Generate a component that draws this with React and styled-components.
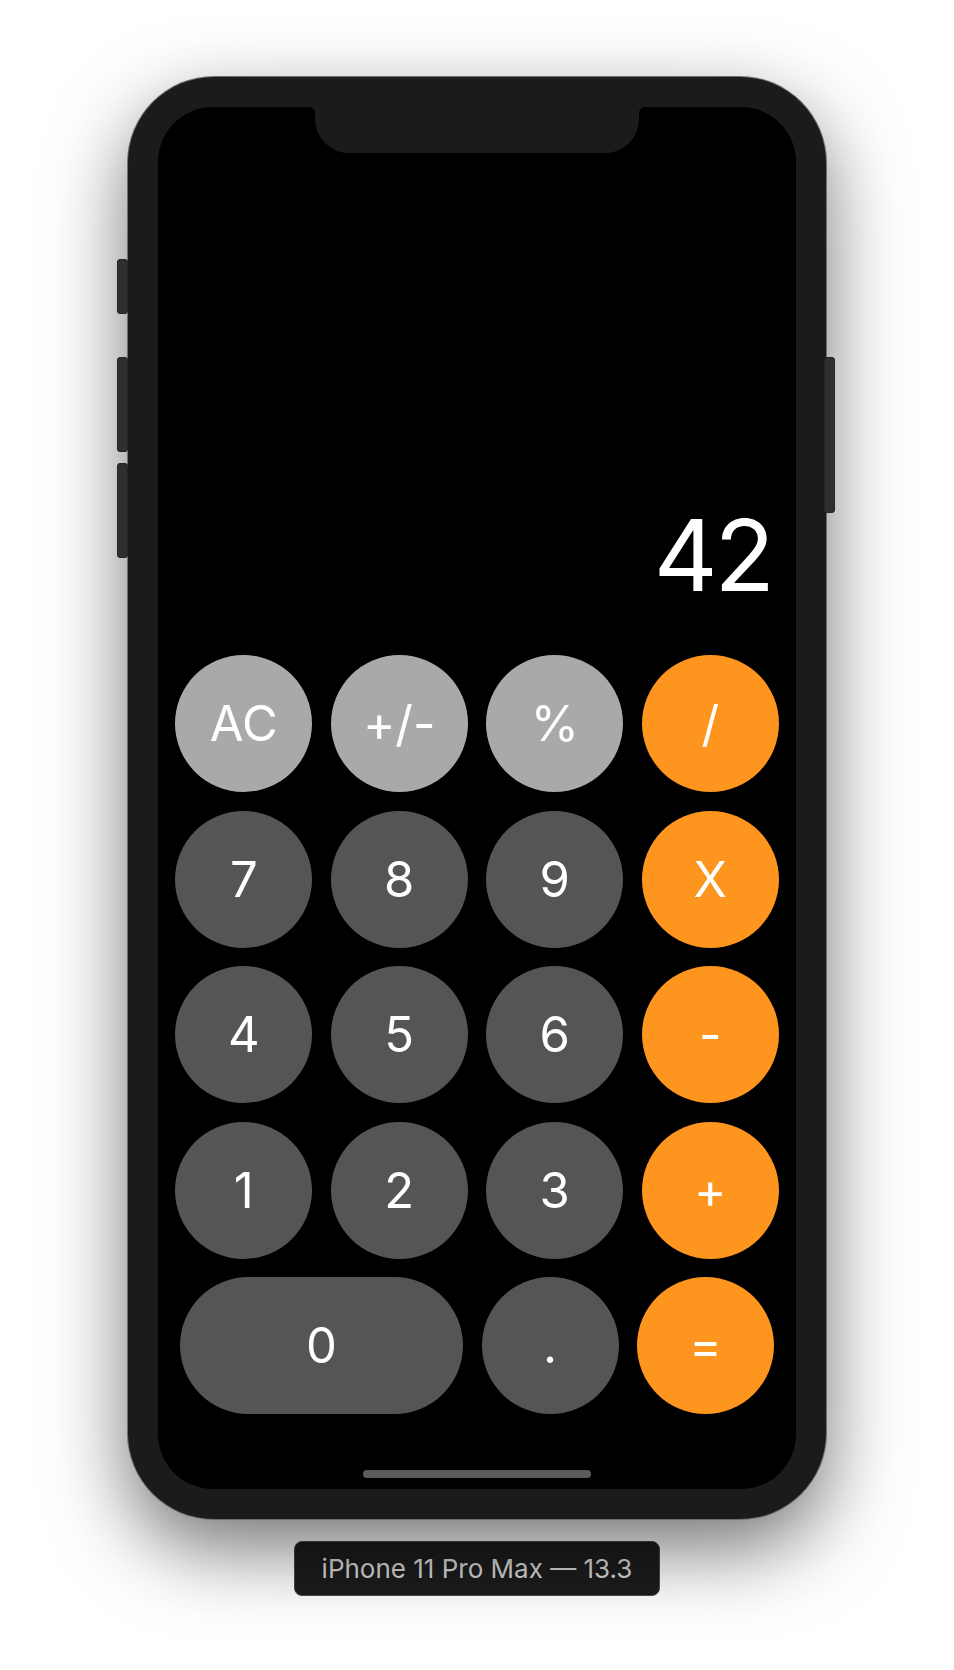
import styled, { createGlobalStyle } from 'styled-components';

const GlobalStyle = createGlobalStyle`
  html, body {
    margin: 0;
    padding: 0;
    background: #ffffff;
  }
  body {
    font-family: Inter, "Liberation Sans", Arial, sans-serif;
  }
`;

const Page = styled.div`
  width: 954px;
  height: 1670px;
  box-sizing: border-box;
  padding-top: 77px;
  display: flex;
  flex-direction: column;
  align-items: center;
  overflow: hidden;
`;

const Phone = styled.div`
  position: relative;
  width: 698px;
  height: 1442px;
  box-sizing: border-box;
  padding: 30px;
  border-radius: 86px;
  background: #1b1b1b;
  box-shadow: 0 0 0 1px #707070, 0 30px 80px rgba(0, 0, 0, 0.55);
`;

// hardware buttons sticking out of the frame
const SideKey = styled.div`
  position: absolute;
  top: ${(p) => p.$top}px;
  height: ${(p) => p.$height}px;
  width: 11px;
  ${(p) => (p.$right ? 'right: -9px;' : 'left: -11px;')}
  border-radius: 4px;
  background: #2f2f2f;
  box-shadow: inset 0 0 0 1px #262626;
`;

const Notch = styled.div`
  position: absolute;
  top: 30px;
  left: 187px;
  width: 324px;
  height: 46px;
  background: #1b1b1b;
  border-radius: 0 0 34px 34px;
  z-index: 2;

  &::before,
  &::after {
    content: '';
    position: absolute;
    top: 0;
    width: 7px;
    height: 7px;
  }
  &::before {
    left: -7px;
    background: radial-gradient(circle at 0 100%, transparent 7px, #1b1b1b 7.5px);
  }
  &::after {
    right: -7px;
    background: radial-gradient(circle at 100% 100%, transparent 7px, #1b1b1b 7.5px);
  }
`;

const Screen = styled.div`
  height: 100%;
  border-radius: 55px;
  background: #000000;
  display: flex;
  flex-direction: column;
  overflow: hidden;
`;

const Display = styled.div`
  flex: 1;
  display: flex;
  align-items: flex-end;
  justify-content: flex-end;
  padding: 0 24px 50px;
  color: #ffffff;
  font-size: 99px;
  line-height: 100px;
  font-weight: 400;
  letter-spacing: -3px;
`;

const Keypad = styled.div`
  display: flex;
  flex-direction: column;
  gap: 18.5px;
`;

const KeyRow = styled.div`
  display: flex;
  justify-content: center;
  gap: 18.5px;
`;

const keyColors = {
  light: '#a9a9a9',
  dark: '#555555',
  accent: '#fd951f',
};

const Key = styled.button`
  width: ${(p) => (p.$wide ? 283 : 137)}px;
  height: 137px;
  flex: none;
  padding: 0;
  border: none;
  border-radius: 69px;
  background: ${(p) => keyColors[p.$variant]};
  color: #ffffff;
  font-family: Inter, "Liberation Sans", Arial, sans-serif;
  font-size: 49px;
  line-height: 1;
  font-weight: 400;
  display: flex;
  align-items: center;
  justify-content: center;
`;

const HomeBar = styled.div`
  width: 228px;
  height: 8px;
  border-radius: 4px;
  background: #5b5b5b;
  margin: 56px auto 11px;
`;

const DeviceLabel = styled.div`
  margin-top: 22px;
  width: 366px;
  height: 55px;
  box-sizing: border-box;
  border: 1px solid #4a4a4a;
  border-radius: 8px;
  background: #1c1c1c;
  color: #d8d8d8;
  font-size: 26px;
  display: flex;
  align-items: center;
  justify-content: center;
`;

const rows = [
  [
    ['AC', 'light'],
    ['+/-', 'light'],
    ['%', 'light'],
    ['/', 'accent'],
  ],
  [
    ['7', 'dark'],
    ['8', 'dark'],
    ['9', 'dark'],
    ['X', 'accent'],
  ],
  [
    ['4', 'dark'],
    ['5', 'dark'],
    ['6', 'dark'],
    ['-', 'accent'],
  ],
  [
    ['1', 'dark'],
    ['2', 'dark'],
    ['3', 'dark'],
    ['+', 'accent'],
  ],
];

export default function App() {
  return (
    <Page>
      <GlobalStyle />
      <Phone>
        <SideKey $top={182} $height={55} />
        <SideKey $top={280} $height={95} />
        <SideKey $top={386} $height={95} />
        <SideKey $right $top={280} $height={156} />
        <Notch />
        <Screen>
          <Display>42</Display>
          <Keypad>
            {rows.map((row, i) => (
              <KeyRow key={i}>
                {row.map(([label, variant]) => (
                  <Key key={label} $variant={variant}>{label}</Key>
                ))}
              </KeyRow>
            ))}
            <KeyRow>
              <Key $wide $variant="dark">0</Key>
              <Key $variant="dark">.</Key>
              <Key $variant="accent">=</Key>
            </KeyRow>
          </Keypad>
          <HomeBar />
        </Screen>
      </Phone>
      <DeviceLabel>iPhone 11 Pro Max — 13.3</DeviceLabel>
    </Page>
  );
}
